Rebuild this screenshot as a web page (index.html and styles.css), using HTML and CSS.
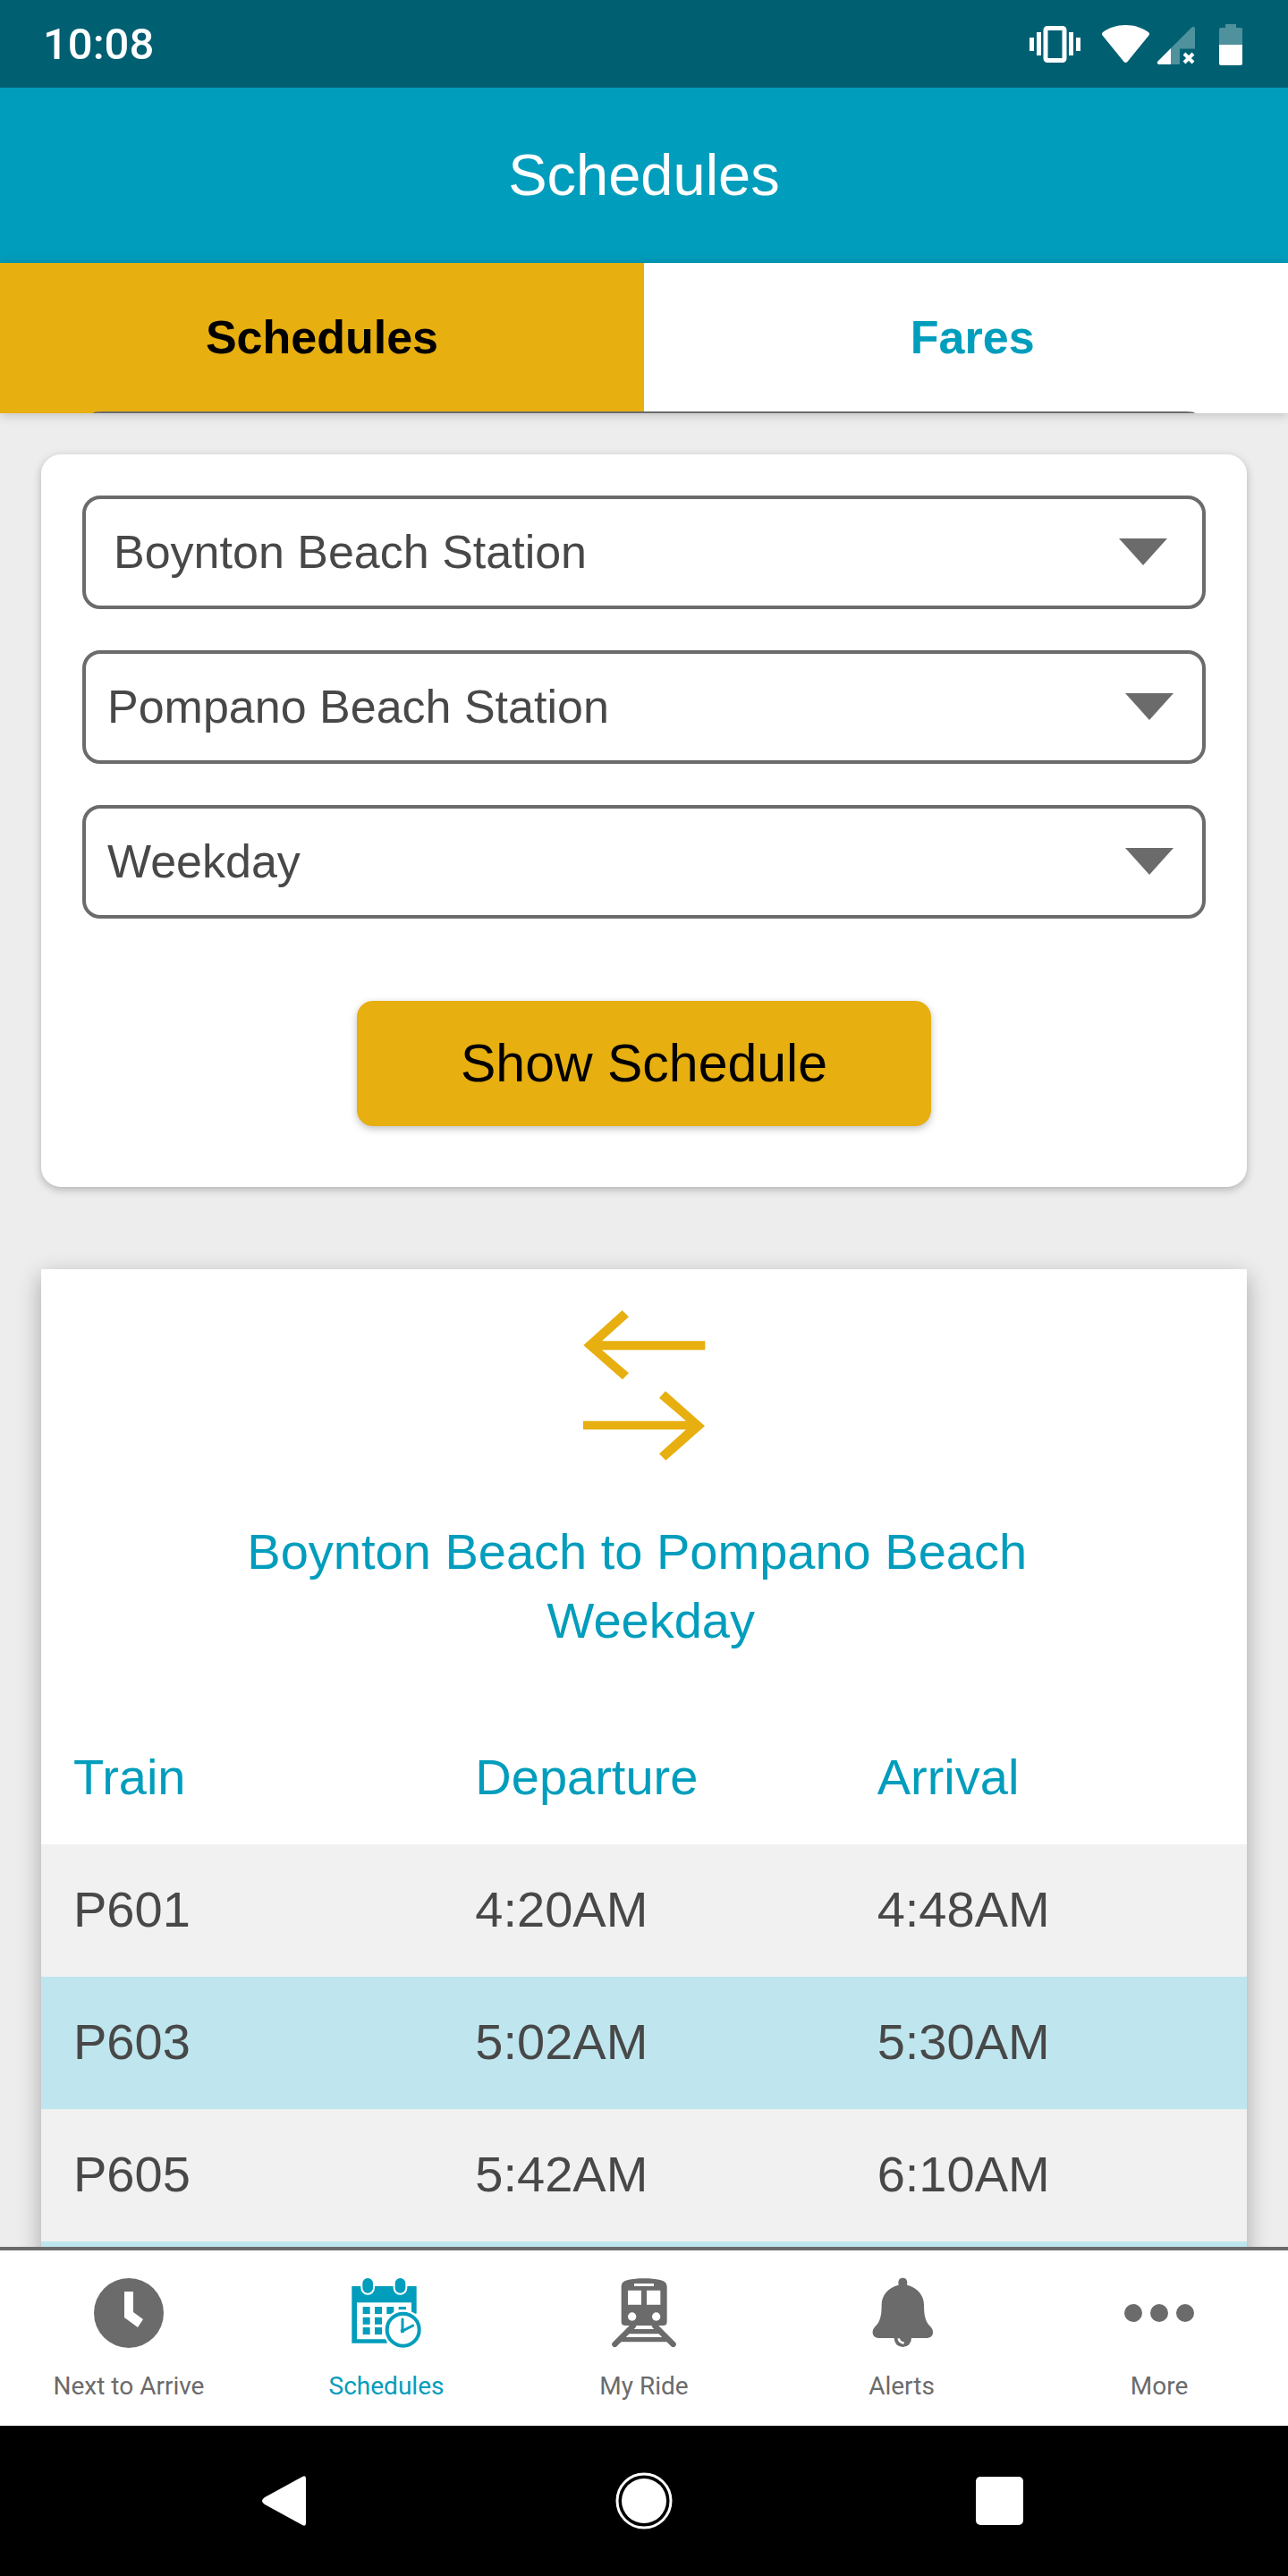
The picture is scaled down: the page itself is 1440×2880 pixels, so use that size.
FILE: index.html
```html
<!DOCTYPE html>
<html lang="en">
  <head>
    <meta charset="UTF-8" />
    <meta name="viewport" content="width=device-width, initial-scale=1.0" />
    <title>Schedules</title>
    <link rel="stylesheet" href="styles.css">
  </head>
  <body>
    <div class="status-bar">
      <div class="time">10:08</div>
      <div class="status-icons">
        <!-- vibrate -->
        <svg width="80" height="50" viewBox="1140 24 80 50">
          <path d="M1151 41h5v15h-5zM1159 35h5v26h-5zM1195 35h5v26h-5zM1203 41h5v15h-5z" fill="#fff" />
          <rect x="1169" y="30.500" width="21" height="36" rx="2" fill="none" stroke="#fff" stroke-width="5" />
        </svg>
        <!-- wifi -->
        <svg width="70" height="50" viewBox="1220 24 70 50">
          <path d="M1258.500 27c10 0 19 3 25.500 8 1 1 1.500 2 .5 3.500l-24 29.500c-1 1.300-3 1.300-4 0l-24-29.500c-1-1.500-.5-2.500.5-3.500 6.500-5 15.500-8 25.500-8z" fill="#fff" />
        </svg>
        <!-- signal -->
        <svg width="60" height="50" viewBox="1290 24 60 50">
          <path d="M1309 53l23.500-23.500c1.500-1 3.500-.5 3.500 1.500v22.500h-17V71h-10z" fill="#4f919d" />
          <path d="M1309 53v18h-13c-2 0-3-2-1.500-3.500z" fill="#fff" />
          <path d="M1324 59l10 10M1334 59l-10 10" stroke="#fff" stroke-width="4" />
        </svg>
        <!-- battery -->
        <svg width="50" height="50" viewBox="1350 24 50 50">
          <path d="M1370 26h12v4h5q2 0 2 2v17h-26V32q0-2 2-2h5z" fill="#4f919d" />
          <path d="M1363 49h26v21q0 2-2 2h-22q-2 0-2-2z" fill="#fff" />
        </svg>
      </div>
    </div>

    <header class="header">
      <h1>Schedules</h1>
    </header>

    <div class="tabs">
      <button class="tab active">Schedules</button>
      <button class="tab">&nbsp;Fares</button>
    </div>

    <main class="content">
      <form class="card search">
        <div class="field field-from">
          <select id="from" aria-label="From">
            <option>Boynton Beach Station</option>
            <option>Pompano Beach Station</option>
          </select>
          <svg width="54" height="30" viewBox="0 0 54 30"><path d="M0 0h54L27 30z" /></svg>
        </div>

        <div class="field">
          <select id="to" aria-label="To">
            <option>Pompano Beach Station</option>
            <option>Boynton Beach Station</option>
          </select>
          <svg width="54" height="30" viewBox="0 0 54 30"><path d="M0 0h54L27 30z" /></svg>
        </div>

        <div class="field">
          <select id="day" aria-label="Day">
            <option>Weekday</option>
            <option>Weekend</option>
          </select>
          <svg width="54" height="30" viewBox="0 0 54 30"><path d="M0 0h54L27 30z" /></svg>
        </div>

        <button type="button" class="show-btn">Show Schedule</button>
      </form>

      <section class="results">
        <button class="swap" aria-label="Swap stations">
          <svg width="140" height="170" viewBox="150 192 420 510">
            <path d="M157 312L287 195L309 217L219 298H565V328H219L309 405L288 427Z" />
            <path d="M156 566H501L411 489L432 466L564 583L433 698L411 676L501 595H156Z" />
          </svg>
        </button>
        <h2>Boynton Beach to Pompano Beach&nbsp;<br>&nbsp;Weekday</h2>

        <table class="schedule">
          <thead>
            <tr>
              <th>Train</th>
              <th>Departure</th>
              <th>Arrival</th>
            </tr>
          </thead>
          <tbody>
            <tr>
              <td>P601</td>
              <td>4:20AM</td>
              <td>4:48AM</td>
            </tr>
            <tr>
              <td>P603</td>
              <td>5:02AM</td>
              <td>5:30AM</td>
            </tr>
            <tr>
              <td>P605</td>
              <td>5:42AM</td>
              <td>6:10AM</td>
            </tr>
            <tr>
              <td></td>
              <td></td>
              <td></td>
            </tr>
          </tbody>
        </table>
      </section>
    </main>

    <nav class="bottom-nav">
      <a href="#">
        <svg width="80" height="80" viewBox="0 0 80 80">
          <circle cx="40" cy="40" r="39" fill="currentColor" />
          <path d="M35 16h10v23l11 8-6 9-15-11z" fill="#fff" />
        </svg>
        Next to Arrive
      </a>
      <a href="#" class="active">
        <svg width="80" height="80" viewBox="96 48 240 240">
          <path fill="currentColor" d="M100 78h217v92h-17v-37H117v123h101v13H100z" />
          <g fill="currentColor" stroke="#fff" stroke-width="6">
            <rect x="133" y="48" width="41" height="56" rx="20" />
            <rect x="242" y="48" width="41" height="56" rx="20" />
          </g>
          <path fill="currentColor" d="M137 147h24v24h-24zM177 147h24v24h-24zM217 147h24v24h-24zM257 147h25v10h-25zM137 182h24v24h-24zM177 182h24v24h-24zM137 216h24v24h-24zM177 216h24v24h-24z" />
          <circle cx="272" cy="224" r="67" fill="#fff" />
          <circle cx="272" cy="224" r="54" fill="none" stroke="currentColor" stroke-width="12" />
          <path d="M270 189v39l35-18" fill="none" stroke="currentColor" stroke-width="9" stroke-linecap="round" />
          <circle cx="270" cy="228" r="7" fill="currentColor" />
        </svg>
        Schedules
      </a>
      <a href="#">
        <svg width="80" height="80" viewBox="60 48 240 240">
          <path fill="currentColor" d="M104 80c0-14 8-20 22-23 30-7 78-7 108 0 14 3 23 9 23 23v117q0 13-13 13H117q-13 0-13-13z" />
          <path fill="#fff" d="M147 69h66v9h-66zM126 92h45v48h-45zM189 92h46v48h-46z" />
          <circle cx="140" cy="180" r="14" fill="#fff" />
          <circle cx="221" cy="180" r="14" fill="#fff" />
          <path fill="none" stroke="currentColor" stroke-width="19" stroke-linecap="round" d="M144 211L82 273M216 211l62 62" />
          <path fill="none" stroke="currentColor" stroke-width="16" d="M128 230h104M100 257h160" />
        </svg>
        My Ride
      </a>
      <a href="#">
        <svg width="80" height="80" viewBox="924 48 240 240">
          <path fill="currentColor" d="M1034 74c-3-14 2-24 14-24s17 10 14 24c36 8 57 36 57 66 0 34 4 56 22 74 14 14 10 38-12 38h-162c-22 0-26-24-12-38 18-18 22-40 22-74 0-30 21-58 57-66z" />
          <circle cx="1048" cy="253" r="29" fill="currentColor" />
          <path fill="none" stroke="#fff" stroke-width="8" d="M1034 253q2 13 18 16" />
        </svg>
        Alerts
      </a>
      <a href="#">
        <svg width="80" height="80" viewBox="0 0 80 80" fill="currentColor">
          <circle cx="11" cy="40" r="10" />
          <circle cx="40" cy="40" r="10" />
          <circle cx="69" cy="40" r="10" />
        </svg>
        More
      </a>
    </nav>

    <div class="system-nav">
      <button aria-label="Back">
        <svg width="80" height="80" viewBox="0 0 80 80">
          <path d="M16 36L58 13q4-2 4 2v50q0 4-4 2L16 44q-6-4 0-8z" fill="#fff" />
        </svg>
      </button>
      <button aria-label="Home">
        <svg width="80" height="80" viewBox="0 0 80 80">
          <circle cx="40" cy="40" r="30" fill="none" stroke="#fff" stroke-width="3" />
          <circle cx="40" cy="40" r="25" fill="#fff" />
        </svg>
      </button>
      <button aria-label="Recent apps">
        <svg width="80" height="80" viewBox="0 0 80 80">
          <rect x="11" y="13" width="53" height="54" rx="5" fill="#fff" />
        </svg>
      </button>
    </div>
  </body>
</html>
```
FILE: styles.css
```css
* {
  box-sizing: border-box;
}
body {
  display: flex;
  flex-direction: column;
  height: 100vh;
  margin: 0;
  background-color: #ededed;
  color: #484848;
  font-family: "Liberation Sans", Arial, sans-serif;
}
button,
select {
  border: 0;
  padding: 0;
  background: none;
  color: inherit;
  font: inherit;
}
svg {
  display: block;
}

/* status bar */
.status-bar {
  display: flex;
  justify-content: space-between;
  align-items: center;
  height: 98px;
  padding: 2px 40px 0 48px;
  background-color: #005f71;
  color: white;
  flex-shrink: 0;
}
.time {
  font: 500 49px/60px Roboto, sans-serif;
}
.status-icons {
  display: flex;
}

.header {
  padding: 57px 0;
  background-color: #009dbc;
  color: white;
  text-align: center;
}
.header h1 {
  margin: 0;
  font-size: 65px;
  font-weight: normal;
  line-height: 82px;
}

/* tabs */
.tabs {
  display: flex;
  position: relative;
  z-index: 1;
  background-color: white;
  box-shadow: 0 2px 12px rgba(0, 0, 0, 0.2);
}
.tabs::after {
  content: "";
  position: absolute;
  bottom: 0;
  left: 104px;
  right: 104px;
  height: 2px;
  border-radius: 10px 10px 0 0 / 2px 2px 0 0;
  background-color: #6b6b6b;
}
.tab {
  flex: 1;
  padding: 53px 0 55px;
  color: #009dbc;
  font-size: 52px;
  font-weight: bold;
  line-height: 60px;
}
.tab.active {
  background-color: #e7af10;
  color: black;
}

.content {
  flex: 1;
  min-height: 0;
  padding: 46px 46px 0;
  overflow: hidden;
}

/* search card */
.card {
  display: flex;
  flex-direction: column;
  gap: 46px;
  padding: 46px 46px 68px;
  border-radius: 22px;
  background-color: white;
  box-shadow: 0 3px 10px rgba(0, 0, 0, 0.25);
}
.field {
  display: flex;
  align-items: center;
  height: 127px;
  padding: 0 32px 2px 24px;
  border: 4px solid #6b6b6b;
  border-radius: 20px;
}
.field-from {
  padding: 0 39px 2px 31px;
}
.field select {
  flex: 1;
  appearance: none;
  font-size: 52px;
  line-height: 64px;
}
.field svg {
  fill: #6b6b6b;
}
.show-btn {
  align-self: center;
  margin-top: 46px;
  padding: 35px 116px;
  border-radius: 18px;
  background-color: #e7af10;
  box-shadow: 0 3px 8px rgba(0, 0, 0, 0.25);
  color: black;
  font-size: 59px;
  line-height: 70px;
}

/* results */
.results {
  margin-top: 92px;
  padding-top: 45px;
  background-color: white;
  box-shadow: 0 8px 24px rgba(0, 0, 0, 0.3);
}
.swap {
  display: block;
  margin: 0 auto;
}
.swap svg {
  fill: #e7af10;
}
.results h2 {
  margin: 62px 0 64px;
  color: #009dbc;
  font-size: 56px;
  font-weight: normal;
  line-height: 77px;
  text-align: center;
}

.schedule {
  width: 100%;
  border-collapse: collapse;
  table-layout: fixed;
  font-size: 56px;
}
.schedule th,
.schedule td {
  height: 148px;
  padding: 0 0 3px 36px;
  text-align: left;
}
.schedule th {
  color: #009dbc;
  font-weight: normal;
}
.schedule tbody tr {
  background-color: #f1f1f1;
}
.schedule tbody tr:nth-child(even) {
  background-color: #bfe6ee;
}

/* app navigation */
.bottom-nav {
  display: flex;
  position: relative;
  border-top: 4px solid #6b6b6b;
  background-color: white;
}
.bottom-nav a {
  display: flex;
  flex: 1;
  flex-direction: column;
  align-items: center;
  gap: 24px;
  padding: 30px 0 26px;
  color: #6b6b6b;
  font: 28px/36px Roboto, sans-serif;
  text-decoration: none;
}
.bottom-nav a.active {
  color: #009dbc;
}

.system-nav {
  display: flex;
  padding: 44px 120px;
  background-color: black;
}
.system-nav button {
  display: flex;
  flex: 1;
  justify-content: center;
}
```
